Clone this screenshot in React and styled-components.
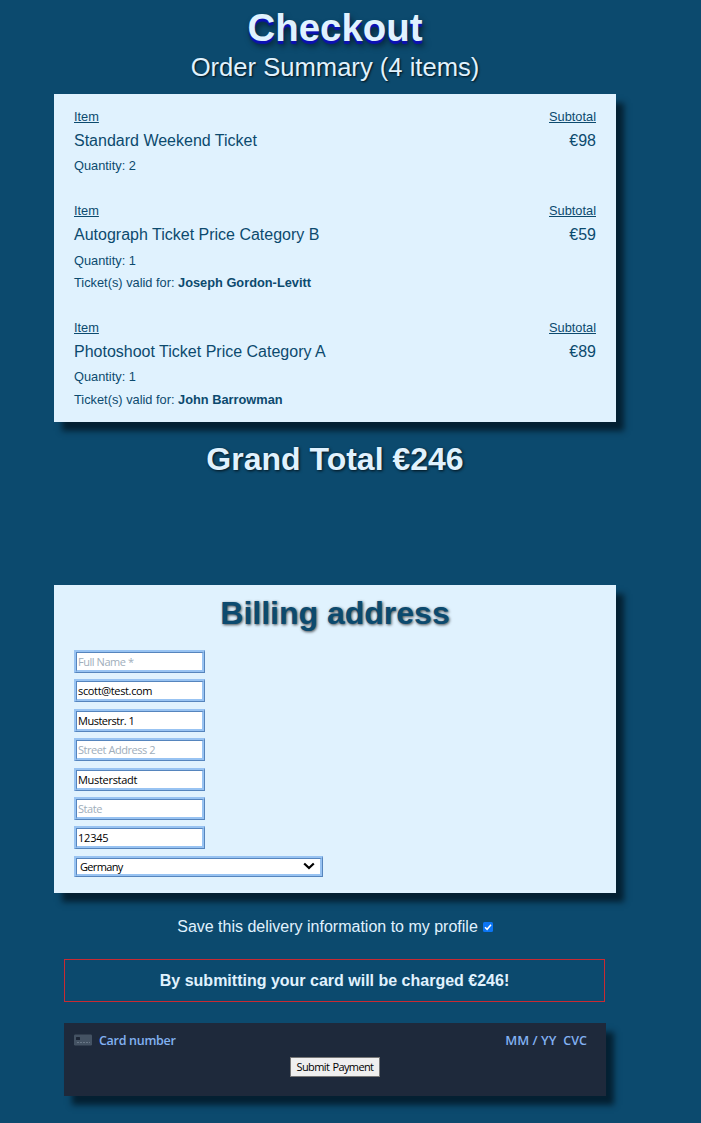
import React from "react";
import styled, { createGlobalStyle } from "styled-components";

const GlobalStyle = createGlobalStyle`
  * { box-sizing: border-box; }
  body {
    margin: 0;
    min-height: 1123px;
    background: #0c4a6e;
    color: #e0f2fe;
    font-family: "Liberation Sans", Arial, sans-serif;
  }
`;

const Page = styled.main`
  width: 562px;
  margin-left: 54px;
  padding-top: 6px;
  display: flex;
  flex-direction: column;
`;

const Title = styled.h1`
  margin: 0;
  font-size: 38.4px;
  line-height: 44px;
  text-align: center;
  text-shadow: 0 3px 1px #0c10b4, 2px 5px 6px rgba(0, 0, 0, 0.6);
`;

const Subtitle = styled.h2`
  margin: 1px 0 10px;
  font-size: 25.6px;
  font-weight: 400;
  line-height: 33px;
  text-align: center;
  text-shadow: 1px 1px 2px rgba(0, 0, 0, 0.8);
`;

const Panel = styled.section`
  height: ${(p) => p.$height}px;
  padding: 0 20px;
  background: #e0f2fe;
  color: #0c4a6e;
  box-shadow: 8px 9px 6px rgba(2, 23, 36, 0.82);
`;

const OrderLine = styled.article`
  padding-top: ${(p) => p.$top}px;
`;

const Row = styled.div`
  display: flex;
  justify-content: space-between;
  height: ${(p) => p.$height || 24}px;
  line-height: 24px;
  font-size: 16px;
`;

const Label = styled.span`
  font-size: 12.8px;
  text-decoration: underline;
`;

const Detail = styled.div`
  height: 22.5px;
  line-height: 24px;
  font-size: 12.8px;
`;

const Heading = styled.h2`
  margin: ${(p) => p.$margin};
  padding-top: ${(p) => p.$top || 0}px;
  font-size: 32px;
  line-height: 36px;
  text-align: center;
  text-shadow: 1px 1px 3px rgba(0, 0, 0, ${(p) => p.$shade});
`;

const Fields = styled.form`
  display: flex;
  flex-direction: column;
  align-items: flex-start;
  gap: 6.4px;
`;

const fieldFont = `
  font-family: "Open Sans", "Noto Sans", sans-serif;
  font-size: 11px;
`;

const Ridge = styled.div`
  display: flex;
  width: ${(p) => p.$width}px;
  height: ${(p) => p.$height}px;
  border: solid;
  border-width: 2px 1px 1px 2px;
  border-color: #98c3f2 #5685bd #5685bd #98c3f2;
  background: #fff;
`;

const innerEdge = `
  border: solid;
  border-width: 1px 2px 2px 1px;
  border-color: #5685bd #98c3f2 #98c3f2 #5685bd;
  border-radius: 0;
  outline: 0;
  background: #fff;
  color: #000;
`;

const Field = styled.input`
  width: 100%;
  height: 100%;
  padding: 0 1px;
  ${innerEdge}
  ${fieldFont}
  letter-spacing: ${(p) => p.$spacing || "-0.45px"};
  &::placeholder { color: #a0aebb; opacity: 1; }
`;

const SelectBox = styled.button`
  width: 100%;
  height: 100%;
  padding: 0 5px 0 3px;
  display: flex;
  align-items: center;
  justify-content: space-between;
  ${innerEdge}
  ${fieldFont}
  letter-spacing: -0.65px;
`;

const SaveRow = styled.label`
  display: flex;
  justify-content: center;
  align-items: center;
  gap: 5px;
  height: 20px;
  margin-top: 24px;
  font-size: 16px;
`;

const Check = styled.svg`
  width: 10px;
  height: 10px;
`;

const Warning = styled.p`
  height: 43px;
  margin: 22px 11px 0 10px;
  border: 1px solid #c92a32;
  font-weight: 700;
  font-size: 16px;
  line-height: 41px;
  text-align: center;
`;

const CardPanel = styled.section`
  height: 73px;
  margin: 21px 10px 0;
  padding: 8px 19px 0 10px;
  background: #1e293b;
  box-shadow: 8px 9px 6px rgba(2, 23, 36, 0.82);
`;

const CardRow = styled.div`
  display: flex;
  align-items: center;
  height: 18px;
  color: #82b1f2;
  font: 600 12.5px "Open Sans", "Noto Sans", sans-serif;
  letter-spacing: -0.3px;
`;

const CardIcon = styled.svg`
  width: 18px;
  height: 12px;
  margin: 0 7px 1px 0;
`;

const Expiry = styled.span`
  margin-left: auto;
  margin-right: 7px;
  font-size: 13px;
  letter-spacing: 0;
`;

const Cvc = styled.span`
  letter-spacing: 0;
`;

const Submit = styled.button`
  display: block;
  width: 90px;
  height: 20px;
  margin: 8px 0 0 216px;
  padding: 0 0 2px;
  border: 1px solid #767676;
  border-radius: 0;
  background: #efefef;
  color: #000;
  ${fieldFont}
  letter-spacing: -0.6px;
  word-spacing: 0.8px;
  white-space: nowrap;
`;

const orders = [
  { name: "Standard Weekend Ticket", price: "€98", quantity: 2, top: 11 },
  { name: "Autograph Ticket Price Category B", price: "€59", quantity: 1, guest: "Joseph Gordon-Levitt", top: 22.5 },
  { name: "Photoshoot Ticket Price Category A", price: "€89", quantity: 1, guest: "John Barrowman", top: 22 },
];

const fields = [
  { hint: "Full Name *" },
  { value: "scott@test.com", spacing: "-0.35px" },
  { value: "Musterstr. 1", spacing: "-0.5px" },
  { hint: "Street Address 2" },
  { value: "Musterstadt", spacing: "-0.3px" },
  { hint: "State" },
  { value: "12345", spacing: "-0.2px" },
];

export default function App() {
  return (
    <>
      <GlobalStyle />
      <Page>
        <Title>Checkout</Title>
        <Subtitle>Order Summary (4 items)</Subtitle>
        <Panel $height={328}>
          {orders.map((o) => (
            <OrderLine key={o.name} $top={o.top}>
              <Row><Label>Item</Label><Label>Subtotal</Label></Row>
              <Row $height={25.4}><span>{o.name}</span><span>{o.price}</span></Row>
              <Detail>Quantity: {o.quantity}</Detail>
              {o.guest && <Detail>Ticket(s) valid for: <b>{o.guest}</b></Detail>}
            </OrderLine>
          ))}
        </Panel>
        <Heading $margin="19px 0 108px" $shade={0.8}>Grand Total €246</Heading>
        <Panel $height={308}>
          <Heading $margin="0 0 19px" $top={10} $shade={0.7}>Billing address</Heading>
          <Fields>
            {fields.map((f) => (
              <Ridge key={f.hint || f.value} $width={131} $height={23}>
                <Field placeholder={f.hint} defaultValue={f.value} $spacing={f.spacing} spellCheck={false} />
              </Ridge>
            ))}
            <Ridge $width={249} $height={21}>
              <SelectBox type="button">
                Germany
                <svg width="12" height="8" viewBox="0 0 12 8" fill="none" stroke="#000" strokeWidth="2.200">
                  <path d="M1.2 1.500 6 6l4.800-4.500" />
                </svg>
              </SelectBox>
            </Ridge>
          </Fields>
        </Panel>
        <SaveRow>
          Save this delivery information to my profile
          <Check viewBox="0 0 10 10">
            <rect width="10" height="10" rx="1.500" fill="#0b75f5" />
            <path d="M2 5.200 4.100 7.300 8 2.700" fill="none" stroke="#fff" strokeWidth="1.500" />
          </Check>
        </SaveRow>
        <Warning>By submitting your card will be charged €246!</Warning>
        <CardPanel>
          <CardRow>
            <CardIcon viewBox="0 0 18 12">
              <rect width="18" height="11" y=".5" rx="1.200" fill="#445263" />
              <rect x="2" y="3" width="4" height="3" rx=".5" fill="#1c2535" />
              <path d="M3 8.500h13" stroke="#687686" strokeDasharray="2 1" />
            </CardIcon>
            Card number
            <Expiry>MM / YY</Expiry>
            <Cvc>CVC</Cvc>
          </CardRow>
          <Submit>Submit Payment</Submit>
        </CardPanel>
      </Page>
    </>
  );
}
